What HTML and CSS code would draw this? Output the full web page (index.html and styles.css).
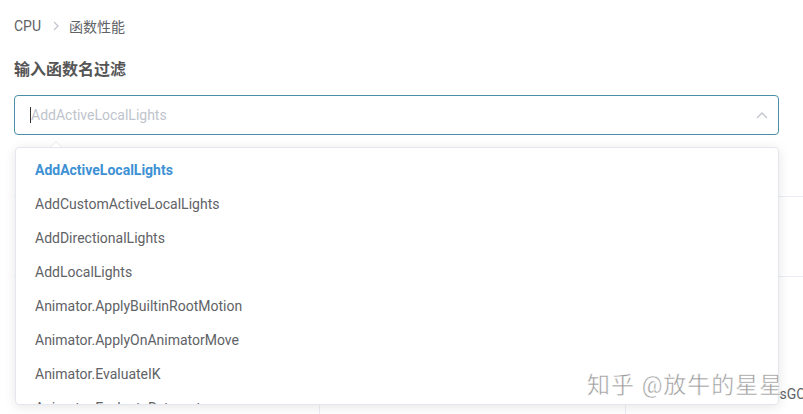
FILE: index.html
```html
<!DOCTYPE html>
<html lang="zh">
<head>
<meta charset="utf-8">
<link rel="stylesheet" href="styles.css">
</head>
<body>
<div class="page">
  <div class="crumbs">
    <span class="crumb">CPU</span>
    <svg class="sep" width="8" height="10" viewBox="0 0 8 10"><polyline points="2,1 6,5 2,9" fill="none" stroke="#c0c4cc" stroke-width="1.2"/></svg>
    <span class="crumb">函数性能</span>
  </div>
  <h2 class="title">输入函数名过滤</h2>
  <div class="select">
    <div class="input">
      <span class="caret"></span><span class="placeholder">AddActiveLocalLights</span>
      <svg class="chev" width="12" height="8" viewBox="0 0 12 8"><polyline points="1,7 6,2 11,7" fill="none" stroke="#c0c4cc" stroke-width="1.3"/></svg>
    </div>
    <div class="dropdown">
      <div class="arrow"></div>
      <ul class="options">
        <li class="opt selected">AddActiveLocalLights</li>
        <li class="opt">AddCustomActiveLocalLights</li>
        <li class="opt">AddDirectionalLights</li>
        <li class="opt">AddLocalLights</li>
        <li class="opt">Animator.ApplyBuiltinRootMotion</li>
        <li class="opt">Animator.ApplyOnAnimatorMove</li>
        <li class="opt">Animator.EvaluateIK</li>
        <li class="opt">Animator.EvaluateRetarget</li>
      </ul>
    </div>
  </div>
  <div class="table">
    <div class="row head"><div class="cell">函数名</div><div class="cell">耗时</div><div class="cell">调用</div></div>
    <div class="row"><div class="cell">A</div><div class="cell">0.1</div><div class="cell">1</div></div>
    <div class="row tall"><div class="cell">B</div><div class="cell">0.2</div><div class="cell"><span class="tail">ProcessGC</span></div></div>
  </div>
  <div class="watermark">知乎 @放牛的星星</div>
</div>
</body>
</html>
```
FILE: styles.css
```css
html, body {
  margin: 0;
  padding: 0;
  background: #fff;
  overflow: hidden;
  width: 803px;
  height: 414px;
}
.page {
  position: relative;
  padding: 17px 24px 0 14px;
  font-family: Roboto, "Noto Sans CJK SC", sans-serif;
  color: #606266;
  width: 803px;
  height: 414px;
  box-sizing: border-box;
  overflow: hidden;
}
.crumbs {
  display: flex;
  align-items: center;
  font-size: 14px;
  height: 18px;
  color: #606266;
}
.sep {
  margin: 0 9px 0 11px;
}
.title {
  margin: 26px 0 0;
  font-size: 16px;
  font-weight: bold;
  line-height: 18px;
  color: #555;
}
.select {
  position: relative;
  margin-top: 16px;
}
.input {
  height: 40px;
  box-sizing: border-box;
  border: 1px solid #4a8fa6;
  border-radius: 4px;
  display: flex;
  align-items: center;
  padding-left: 15px;
  font-size: 14px;
  background: #fff;
}
.caret {
  width: 1px;
  height: 16px;
  background: #333;
}
.placeholder {
  color: #c0c4cc;
}
.chev {
  margin-left: auto;
  margin-right: 10px;
}
.dropdown {
  position: absolute;
  top: 52px;
  left: 1px;
  right: 0;
  height: 258px;
  box-sizing: border-box;
  background: #fff;
  border: 1px solid #e4e7ed;
  border-radius: 4px;
  box-shadow: 0 2px 12px 0 rgba(0, 0, 0, 0.1);
  z-index: 5;
}
.arrow {
  position: absolute;
  top: -7px;
  left: 34px;
  width: 0;
  height: 0;
  border-left: 6px solid transparent;
  border-right: 6px solid transparent;
  border-bottom: 6px solid #e4e7ed;
}
.arrow::after {
  content: "";
  position: absolute;
  left: -5px;
  top: 1px;
  border-left: 5px solid transparent;
  border-right: 5px solid transparent;
  border-bottom: 5px solid #fff;
}
.options {
  list-style: none;
  margin: 0;
  padding: 5px 0 0;
  height: 100%;
  box-sizing: border-box;
  overflow: hidden;
}
.opt {
  height: 34px;
  line-height: 34px;
  padding-left: 19px;
  font-size: 14px;
  color: #606266;
}
.opt.selected {
  color: #3d91d4;
  font-weight: bold;
}
.table {
  margin-top: 16px;
  width: 920px;
  font-size: 14px;
}
.row {
  display: grid;
  grid-template-columns: 306px 306px 308px;
  height: 79px;
  border-bottom: 1px solid #ebeef5;
}
.row.head {
  height: 45px;
  background: #fff;
}
.row.tall {
  height: 234px;
}
.cell {
  display: flex;
  align-items: center;
  padding-left: 10px;
  border-right: 1px solid #ebeef5;
  color: #606266;
}
.tail {
  padding-left: 100px;
}
.watermark {
  position: absolute;
  left: 587px;
  top: 366px;
  font-size: 23px;
  letter-spacing: 1px;
  color: #9a9a9a;
  -webkit-text-stroke: 0.5px #fff;
  z-index: 10;
  white-space: nowrap;
}
```
